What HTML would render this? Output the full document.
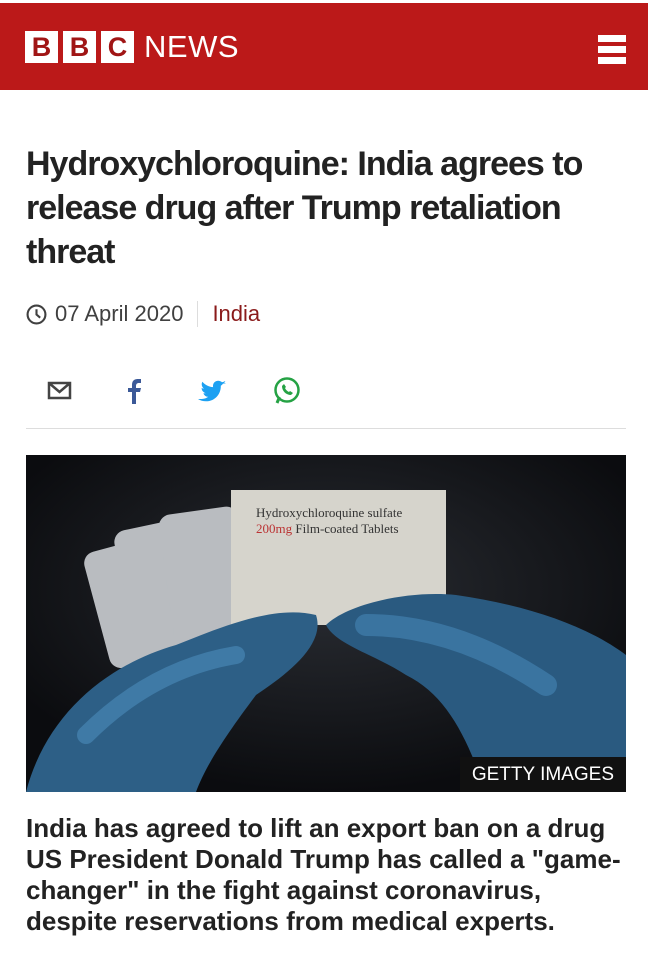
<!DOCTYPE html>
<html><head><style>
body{margin:0;width:648px;height:960px;background:#fff;font-family:"Liberation Sans",sans-serif;overflow:hidden;position:relative}
.bar{position:absolute;left:0;top:3px;width:648px;height:87px;background:#bb1919}
.logo{position:absolute;top:31px;left:25px;display:flex;gap:5px}
.logo span{width:33px;height:32px;background:#fff;color:#a01515;font-weight:bold;font-size:27px;text-align:center;line-height:33px}
.news{position:absolute;left:144px;top:29px;color:#fff;font-size:31px;letter-spacing:0.5px}
.ham{position:absolute;left:598px;top:35px;width:28px}
.ham div{height:7px;background:#fff;margin-bottom:4px}
h1{position:absolute;left:26px;top:142px;margin:0;width:620px;font-size:34px;line-height:44px;color:#222;font-weight:bold;letter-spacing:-1px;white-space:nowrap}
.meta{position:absolute;left:26px;top:301px;font-size:22px;color:#404040;display:flex;align-items:center}
.sep{width:1px;height:26px;background:#ddd;margin:0 14px}
.india{color:#8a1a1a}
.rule{position:absolute;left:26px;top:428px;width:600px;height:1px;background:#ddd}
.img{position:absolute;left:26px;top:455px;width:600px;height:337px;background:#0d0f12;overflow:hidden}
.cap{position:absolute;right:0;bottom:0;background:#111;color:#fff;font-size:19px;padding:7px 12px 6px}
p{position:absolute;left:26px;top:813px;margin:0;width:620px;font-weight:bold;font-size:26px;line-height:31px;color:#222;letter-spacing:0px;white-space:nowrap}
</style></head><body>
<div class="bar"></div>
<div class="logo"><span>B</span><span>B</span><span>C</span></div>
<div class="news">NEWS</div>
<div class="ham"><div></div><div></div><div></div></div>
<h1>Hydroxychloroquine: India agrees to<br>release drug after Trump retaliation<br>threat</h1>
<div class="meta"><svg width="21" height="21" viewBox="0 0 20 20" style="margin-right:8px"><circle cx="10" cy="10" r="8.5" fill="none" stroke="#404040" stroke-width="2"/><path d="M10 5v5l3.5 3" fill="none" stroke="#404040" stroke-width="2"/></svg>07 April 2020<div class="sep"></div><span class="india">India</span></div>
<svg style="position:absolute;left:46px;top:376px" width="260" height="30" viewBox="0 0 260 30">
<path d="M3 7h21v15H3z M3 7l10.5 9L24 7" fill="none" stroke="#444" stroke-width="2.5"/>
<path d="M86 28V16h-4v-4h4V9c0-4 2-6 6-6h3v4h-2c-2 0-3 1-3 3v2h5l-1 4h-4v12z" fill="#3b5998"/>
<path d="M180 7c-1 .5-2 .7-3 .8 1-.6 2-1.6 2.3-2.8-1 .6-2 1-3.3 1.3-1-1-2.4-1.6-3.8-1.6-2.9 0-5.2 2.3-5.2 5.2 0 .4 0 .8.1 1.2-4.3-.2-8.1-2.3-10.7-5.4-.4.8-.7 1.7-.7 2.6 0 1.8.9 3.4 2.3 4.3-.9 0-1.7-.3-2.4-.6 0 2.5 1.8 4.6 4.2 5.1-.8.2-1.6.3-2.4.1.7 2.1 2.6 3.6 4.9 3.6-1.8 1.4-4 2.2-6.5 2.2H152c2.3 1.5 5 2.3 8 2.3 9.6 0 14.8-7.9 14.8-14.8v-.7c1-.7 1.9-1.6 2.6-2.7z" fill="#1da1f2"/>
<circle cx="241" cy="14" r="11.5" fill="none" stroke="#25a244" stroke-width="2.5"/><path d="M231 27l2.5-6" stroke="#25a244" stroke-width="3"/><path d="M236 10c0 5 4 9 9 9l2-2-3-2-1 1c-2-1-3-2-4-4l1-1-2-3z" fill="#25a244"/>
</svg>
<div class="rule"></div>
<div class="img">
<svg width="600" height="337" viewBox="0 0 600 337">
<defs><radialGradient id="g" cx="0.5" cy="0.4" r="0.6"><stop offset="0" stop-color="#2a2d33"/><stop offset="1" stop-color="#0b0c0f"/></radialGradient></defs>
<rect width="600" height="337" fill="url(#g)"/>
<g fill="#b9bcc0"><rect x="70" y="90" width="60" height="120" rx="12" transform="rotate(-15 100 150)"/><rect x="100" y="70" width="70" height="130" rx="12" transform="rotate(-12 130 140)"/><rect x="140" y="55" width="80" height="135" rx="12" transform="rotate(-8 180 120)"/></g>
<rect x="205" y="35" width="215" height="135" fill="#d6d4cc"/>
<text x="230" y="62" font-family="Liberation Serif" font-size="13" fill="#333">Hydroxychloroquine sulfate</text>
<text x="230" y="78" font-family="Liberation Serif" font-size="13" fill="#333"><tspan fill="#b33">200mg</tspan> Film-coated Tablets</text>
<path d="M0 337C20 260 80 210 150 190 200 170 250 150 290 160 300 190 260 220 230 240 200 280 180 310 170 337z" fill="#2d5f86"/>
<path d="M600 337 600 200C560 170 500 150 430 140 380 135 320 150 300 170 310 190 350 200 380 220 420 240 440 280 460 337z" fill="#2a5a80"/>
<path d="M60 280c40-40 90-70 150-80" stroke="#3f7aa6" stroke-width="18" fill="none" stroke-linecap="round"/>
<path d="M340 170c60 0 120 20 180 60" stroke="#3a74a0" stroke-width="22" fill="none" stroke-linecap="round"/>
</svg>
<div class="cap">GETTY IMAGES</div>
</div>
<p>India has agreed to lift an export ban on a drug<br>US President Donald Trump has called a "game-<br>changer" in the fight against coronavirus,<br>despite reservations from medical experts.</p>
</body></html>
